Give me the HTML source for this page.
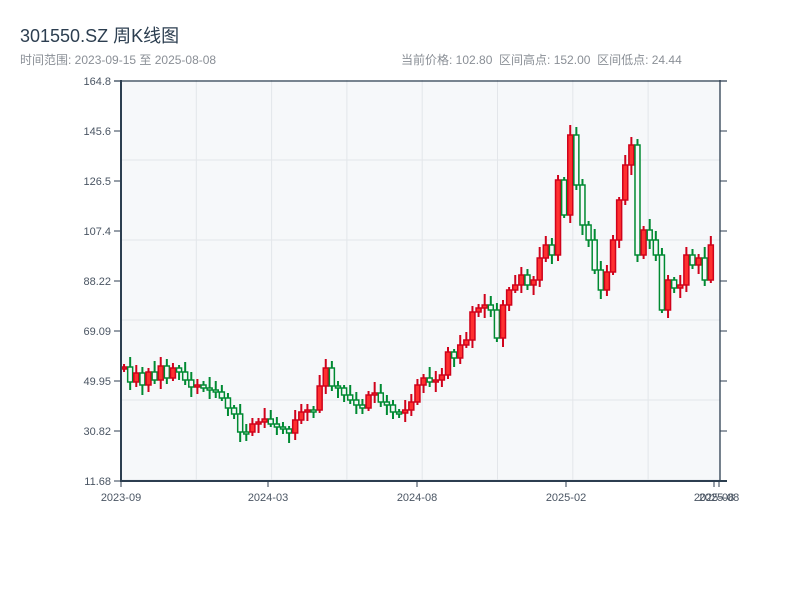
<!DOCTYPE html>
<html><head><meta charset="utf-8"><style>
html,body{margin:0;padding:0;background:#fff;width:800px;height:600px;overflow:hidden}
body{font-family:"Liberation Sans","Noto Sans CJK SC",sans-serif;position:relative}
.t{position:absolute;left:20px;top:22px;font-size:18px;color:#2c3e50}
.s{position:absolute;top:51px;font-size:12px;color:#8a8f96}
</style></head><body>
<div class="t">301550.SZ 周K线图</div>
<div class="s" style="left:20px">时间范围: 2023-09-15 至 2025-08-08</div>
<div class="s" style="left:401px">当前价格: 102.80&nbsp;&nbsp;区间高点: 152.00&nbsp;&nbsp;区间低点: 24.44</div>
<svg id="c" width="800" height="600" style="position:absolute;left:0;top:0" xmlns="http://www.w3.org/2000/svg"></svg>
<script>
(function(){
var s='<rect x="121" y="80" width="599" height="401" fill="#f6f8fa"/>';
for(var k=1;k<8;k++){var gx=121+k*75.3;s+='<line x1="'+gx+'" y1="80" x2="'+gx+'" y2="481" stroke="#e3e6ea"/>';}
for(var gy=160;gy<481;gy+=80)s+='<line x1="121" y1="'+gy+'" x2="720" y2="'+gy+'" stroke="#e3e6ea"/>';
var cl=[367,382,373,385,372,380,366,378,368,372,380,387,385,388,390,392,398,408,414,432,432,424,422,419,424,427,429,433,420,412,410,410,386,368,386,388,395,400,405,408,395,393,402,405,412,413,410,402,385,378,382,380,375,352,358,345,340,312,308,305,310,338,305,290,285,275,285,280,258,245,255,180,215,135,185,225,240,270,290,272,240,200,165,145,255,230,240,255,310,280,288,285,255,265,258,280,245];
var n=cl.length,sp=599/(n+1);
for(var i=0;i<n;i++){var o=i?cl[i-1]:cl[0]+1,c=cl[i];var cx=121+sp*(i+0.5);
var up=c<o;var col=up?'#d0021b':'#008a32';var bt=Math.min(o,c),bb=Math.max(o,c);if(bb-bt<2){bb=bt+2;}
var hh=bt-(3+(i*7%9)),ll=bb+(3+(i*5%8));
s+='<line x1="'+cx+'" y1="'+hh+'" x2="'+cx+'" y2="'+ll+'" stroke="'+col+'" stroke-width="2"/>';
s+='<rect x="'+(cx-2.5)+'" y="'+bt+'" width="5" height="'+(bb-bt)+'" fill="'+(up?'#ff3030':'#f6f8fa')+'" stroke="'+col+'" stroke-width="1.5"/>';}
s+='<line x1="121" y1="80" x2="121" y2="481" stroke="#2c3e50" stroke-width="2"/>';
s+='<line x1="720" y1="80" x2="720" y2="481" stroke="#2c3e50" stroke-width="1.3"/>';
s+='<line x1="114" y1="81" x2="727" y2="81" stroke="#2c3e50" stroke-width="1.3"/>';
s+='<line x1="120" y1="481" x2="727" y2="481" stroke="#2c3e50" stroke-width="2"/>';
var lab=['164.8','145.6','126.5','107.4','88.22','69.09','49.95','30.82','11.68'];
for(var j=0;j<9;j++){var yy=81+j*50;s+='<line x1="114" y1="'+yy+'" x2="121" y2="'+yy+'" stroke="#2c3e50"/><line x1="720" y1="'+yy+'" x2="727" y2="'+yy+'" stroke="#2c3e50"/>';
s+='<text x="111" y="'+(yy+4)+'" text-anchor="end" font-size="11" fill="#4a5563" font-family="Liberation Sans,sans-serif">'+lab[j]+'</text>';}
var xl=[[121,'2023-09'],[268,'2024-03'],[417,'2024-08'],[566,'2025-02'],[714,'2025-08'],[719,'2025-08']];
for(var j2=0;j2<xl.length;j2++){s+='<line x1="'+xl[j2][0]+'" y1="481" x2="'+xl[j2][0]+'" y2="487" stroke="#2c3e50"/><text x="'+xl[j2][0]+'" y="501" text-anchor="middle" font-size="11" fill="#4a5563" font-family="Liberation Sans,sans-serif">'+xl[j2][1]+'</text>';}
document.getElementById('c').innerHTML=s;
})();
</script>
</body></html>
